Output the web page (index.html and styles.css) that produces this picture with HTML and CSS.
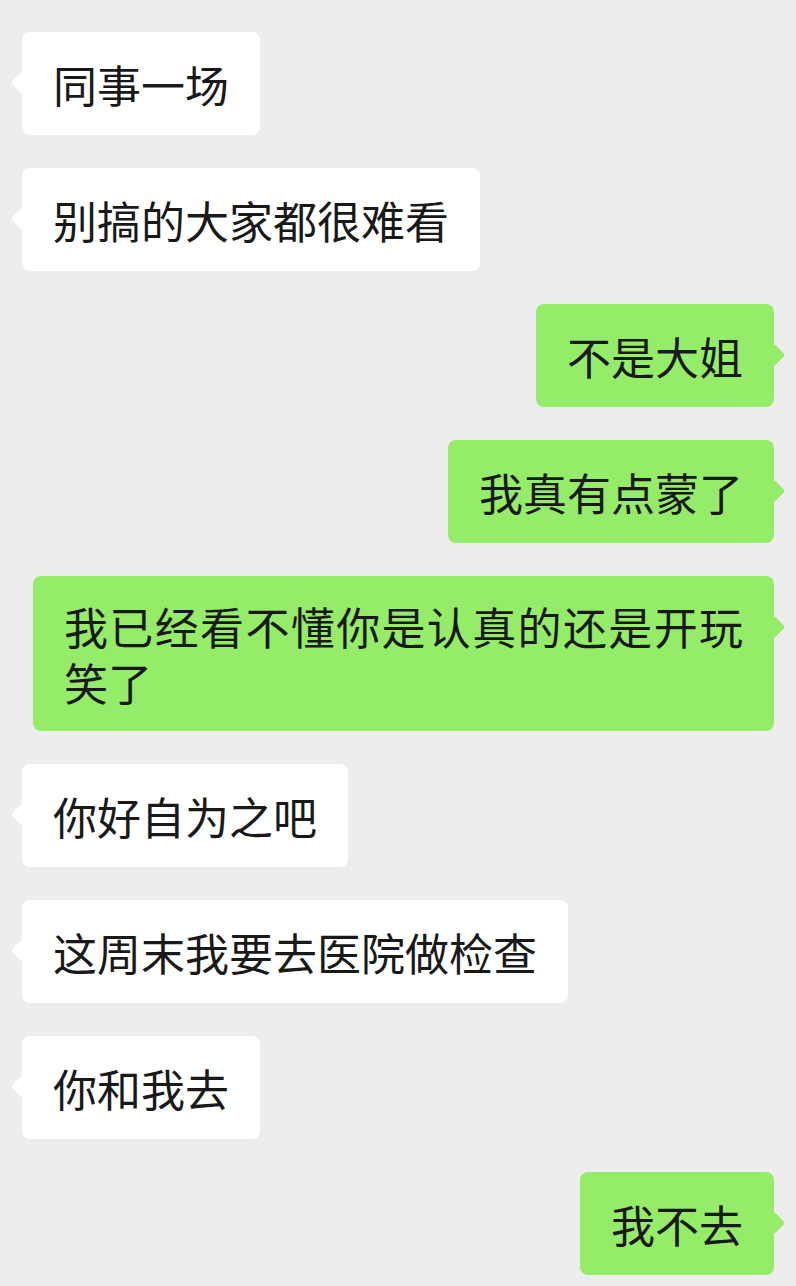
FILE: index.html
```html
<!DOCTYPE html>
<html lang="zh-CN">
<head>
    <meta charset="UTF-8">
    <meta name="viewport" content="width=device-width, initial-scale=1.0">
    <title>聊天记录</title>
    <link rel="stylesheet" href="styles.css">
</head>
<body>
    <main class="chat">
        <div class="msg them"><p>同事一场</p></div>
        <div class="msg them"><p>别搞的大家都很难看</p></div>
        <div class="msg me"><p>不是大姐</p></div>
        <div class="msg me"><p>我真有点蒙了</p></div>
        <div class="msg me"><p>我已经看不懂你是认真的还是开玩笑了</p></div>
        <div class="msg them"><p>你好自为之吧</p></div>
        <div class="msg them"><p>这周末我要去医院做检查</p></div>
        <div class="msg them"><p>你和我去</p></div>
        <div class="msg me"><p>我不去</p></div>
    </main>
</body>
</html>
```

FILE: styles.css
```css
body {
    margin: 0;
    background-color: #ededed;
    font-family: "Noto Sans CJK SC", "Noto Sans", sans-serif;
    color: #191919;
}

.chat {
    display: flex;
    flex-direction: column;
    gap: 33px;
    padding: 32px 22px 0 22px;
}

.msg {
    position: relative;
    max-width: 741px;
    min-height: 103px;
    box-sizing: border-box;
    display: flex;
    align-items: center;
    padding: 21.5px 31px;
    border-radius: 8px;
    font-size: 44px;
    line-height: 56px;

    p {
        margin: 0;
        text-align: justify;
    }

    /* bubble tail */
    &::before {
        content: "";
        position: absolute;
        top: 43px;
        width: 16px;
        height: 16px;
        border-radius: 3px;
        background: inherit;
        transform: rotate(45deg);
    }
}

.them {
    align-self: flex-start;
    background-color: #ffffff;

    &::before { left: -8px; }
}

.me {
    align-self: flex-end;
    background-color: #95ec69;

    &::before { right: -8px; }
}
```
